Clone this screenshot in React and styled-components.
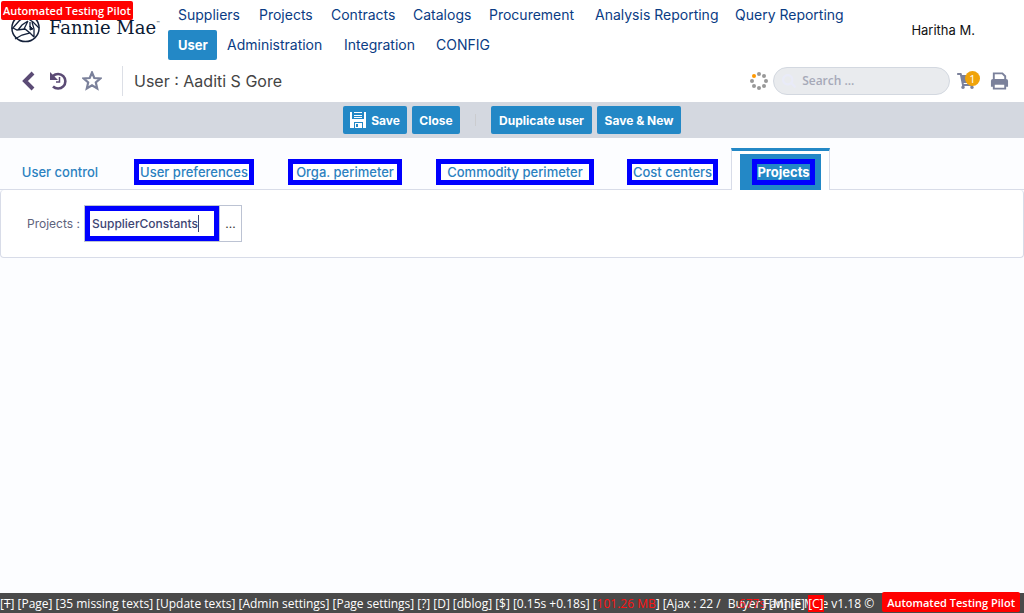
import React from "react";
import styled, { createGlobalStyle, css } from "styled-components";
import { FaShoppingCart, FaSearch } from "react-icons/fa";

const Global = createGlobalStyle`
  * { box-sizing: border-box; }
  body { margin: 0; background: #fcfdff; font-family: Inter, "Open Sans", sans-serif; font-size: 14px; }
  button, input { font: inherit; }
  a { text-decoration: none; color: inherit; }
`;

const Page = styled.div`
  min-height: 100vh;
  display: flex;
  flex-direction: column;
`;

const pilotStyle = css`
  background: #f00;
  color: #fff;
  font: 600 11px/18px "Open Sans", sans-serif;
  border-radius: 2px;
  white-space: nowrap;
`;

const PilotBadge = styled.div`
  ${pilotStyle}
  position: absolute;
  top: 1px;
  left: 1px;
  padding: 1px 2px 0;
`;

const Header = styled.header`
  display: flex;
  height: 60px;
  background: #fff;
`;

const Brand = styled.a`
  display: flex;
  flex: 0 0 168px;
  min-width: 0;
  padding: 11px 0 0 10px;
  gap: 8px;
`;

const BrandName = styled.span`
  color: #0a1a33;
  font: 18px/34px "DejaVu Serif", serif;
  white-space: nowrap;
`;

const Trademark = styled.sup`
  font-size: 4px;
  line-height: 4px;
  vertical-align: 10px;
`;

const Nav = styled.nav`
  flex: 1;
`;

const NavRow = styled.div`
  display: flex;
`;

const NavItem = styled.a`
  width: ${(p) => p.$width}px;
  padding: 0 10px;
  line-height: 30px;
  white-space: nowrap;
  border-radius: 2px;
  color: ${(p) => (p.$active ? "#fff" : "#0a3c84")};
  background: ${(p) => (p.$active ? "#2388c6" : "transparent")};
  font-size: ${(p) => (p.$active ? 13 : 14)}px;
  font-weight: ${(p) => (p.$active ? 700 : 400)};
`;

const Account = styled.div`
  padding: 20px 49px 0 0;
  font-size: 13px;
  line-height: 20px;
  color: #111;
`;

const TitleBar = styled.div`
  display: flex;
  align-items: center;
  height: 42px;
  padding: 0 15px 0 20px;
  background: #fff;
`;

const IconButton = styled.button`
  display: flex;
  border: 0;
  padding: 0;
  background: none;
  margin-right: ${(p) => p.$after || 0}px;
`;

const Title = styled.h1`
  flex: 1;
  margin: 0 0 0 20px;
  padding-left: 11px;
  border-left: 1px solid #dcdfe6;
  font-size: 16px;
  font-weight: 400;
  line-height: 30px;
  color: #444;
`;

const SearchBox = styled.label`
  display: flex;
  align-items: center;
  width: 177px;
  height: 28px;
  margin: 0 7px 0 5px;
  padding: 0 8px;
  gap: 4px;
  border: 1px solid #d3d8e0;
  border-radius: 14px;
  background: #e9ebee;
  color: #e9ebf8;
`;

const SearchInput = styled.input`
  width: 100%;
  border: 0;
  outline: 0;
  background: none;
  font: 600 12px/20px "Open Sans", sans-serif;
  &::placeholder { color: #a6a9b8; opacity: 1; }
`;

const CartButton = styled(IconButton)`
  position: relative;
  width: 23px;
  margin-right: 10px;
  color: #7b819b;
`;

const CartCount = styled.span`
  position: absolute;
  top: -1px;
  right: 0;
  width: 15px;
  border-radius: 8px;
  background: #f0a30a;
  color: #fff;
  font: 11px/15px "Open Sans", sans-serif;
  text-align: center;
`;

const Toolbar = styled.div`
  display: flex;
  justify-content: center;
  align-items: center;
  height: 36px;
  gap: 5px;
  background: #d4d8e0;
`;

const Action = styled.button`
  display: flex;
  align-items: center;
  justify-content: center;
  gap: 5px;
  width: ${(p) => p.$width}px;
  height: 28px;
  padding: 0;
  border: 0;
  border-radius: 2px;
  background: #2388c6;
  color: #fff;
  font-size: 12px;
  font-weight: 700;
  white-space: nowrap;
`;

const Separator = styled.span`
  width: 1px;
  height: 12px;
  margin: 0 10px;
  background: #cbcccf;
`;

const Tabs = styled.nav`
  display: flex;
  align-items: flex-end;
  height: 52px;
  padding: 10px 0 0 20px;
  border-bottom: 1px solid #d8dce8;
`;

const Tab = styled.a`
  width: ${(p) => p.$width}px;
  height: 26px;
  margin: 0 ${(p) => p.$after}px 4px 0;
  line-height: ${(p) => (p.$marked ? 16 : 26)}px;
  border: ${(p) => (p.$marked ? "5px solid #00f" : "0")};
  background: ${(p) => (p.$marked ? "#fff" : "transparent")};
  color: #2b81c0;
  font-size: 13px;
  font-weight: 500;
  text-align: center;
  white-space: nowrap;
`;

const ActiveTab = styled.div`
  height: 42px;
  margin-bottom: -1px;
  padding: 3px 8px 0;
  border: 1px solid #d8dce8;
  border-top: 3px solid #2388c6;
  border-bottom: 0;
  background: #fff;
`;

const ActiveFill = styled.div`
  height: 36px;
  padding: 5px 6px 0 12px;
  background: #2388c6;
`;

const ActiveLink = styled(Tab)`
  display: block;
  background: #2388c6;
  color: #fff;
  font-weight: 700;
`;

const Panel = styled.main`
  display: flex;
  align-items: center;
  height: 68px;
  padding-left: 26px;
  border: 1px solid #d8dce8;
  border-top: 0;
  border-radius: 4px;
  background: #fff;
`;

const FieldLabel = styled.label`
  width: 57px;
  font-size: 12px;
  color: #5e627c;
`;

const FieldBox = styled.div`
  position: relative;
  display: flex;
  border: 1px solid #bcc3d3;
`;

const FieldInput = styled.input`
  width: 134px;
  height: 35px;
  padding: 0 2px;
  border: 5px solid #00f;
  border-radius: 0;
  outline: 0;
  background: #fff;
  color: #3d4573;
  font: 500 12px/20px Inter, sans-serif;
`;

const Caret = styled.span`
  position: absolute;
  left: 113px;
  top: 9px;
  width: 1px;
  height: 17px;
  background: #3d4573;
`;

const MoreButton = styled.button`
  width: 22px;
  height: 35px;
  padding: 0;
  border: 0;
  border-left: 1px solid #bcc3d3;
  background: #fff;
  color: #333;
  font-size: 12px;
`;

const Footer = styled.footer`
  display: flex;
  justify-content: space-between;
  height: 20px;
  margin-top: auto;
  padding-right: 4px;
  background: #4a4a4a;
  color: #fff;
  font: 12px/22px "Open Sans", sans-serif;
  white-space: nowrap;
`;

const DebugInfo = styled.div`
  display: flex;
  gap: 3px;
`;

const Red = styled.span`
  color: #f11;
`;

const Version = styled.div`
  position: relative;
  display: flex;
  gap: 8px;
`;

const Overprint = styled.span`
  position: absolute;
  left: ${(p) => p.$left}px;
  top: 0;
`;

const RedMark = styled.span`
  background: #f00;
`;

const PilotFoot = styled.span`
  ${pilotStyle}
  align-self: flex-start;
  margin-top: -1px;
  padding: 2px 5px 0;
`;

const BrandMark = () => (
  <svg width="31" height="32" viewBox="0 0 31 32" fill="none" stroke="#14213a">
    <circle cx="15.5" cy="17" r="13.6" strokeWidth="1.5" />
    <path d="M2 18 9 10q3-3 8-3l6 4 6 6M3 17l4 2 8-1 5 4-8 2-7 4M8 19l4-5 6-4M18 10l-4 8M22 11l2 7v8M20 11v5M20 22l4 4" strokeWidth="1.3" />
    <path d="m20 15 3 3-3 1z" fill="#14213a" />
  </svg>
);

const dots = [[9, 2], [14, 4], [16, 9], [14, 14], [9, 16], [4, 14], [2, 9], [4, 4]];
const Spinner = () => (
  <svg width="18" height="18" viewBox="0 0 18 18">
    {dots.map(([x, y], i) => <circle key={i} cx={x} cy={y} r="2" fill={i === 7 ? "#f90" : "#999"} />)}
  </svg>
);

const tabs = [
  ["User control", 80, 34, false],
  ["User preferences", 120, 34, true],
  ["Orga. perimeter", 114, 34, true],
  ["Commodity perimeter", 158, 33, true],
  ["Cost centers", 91, 13, true],
];

const menu = [["Suppliers", 81], ["Projects", 72], ["Contracts", 82], ["Catalogs", 76], ["Procurement", 106], ["Analysis Reporting", 140], ["Query Reporting", 128]];
const submenu = [["User", 49], ["Administration", 117], ["Integration", 92], ["CONFIG", 71]];

export default function App() {
  return (
    <Page>
      <Global />
      <Header>
        <Brand href="#"><BrandMark /><BrandName>Fannie Mae<Trademark>™</Trademark></BrandName></Brand>
        <Nav>
          <NavRow>{menu.map(([t, w]) => <NavItem href="#" key={t} $width={w}>{t}</NavItem>)}</NavRow>
          <NavRow>{submenu.map(([t, w]) => <NavItem href="#" key={t} $width={w} $active={t === "User"}>{t}</NavItem>)}</NavRow>
        </Nav>
        <Account>Haritha M.</Account>
      </Header>
      <PilotBadge>Automated Testing Pilot</PilotBadge>
      <TitleBar>
        <IconButton aria-label="Back" $after={13}>
          <svg width="17" height="20" viewBox="0 0 17 20"><path d="M13 2 5 10l8 8" fill="none" stroke="#5b4b75" strokeWidth="4" /></svg>
        </IconButton>
        <IconButton aria-label="History" $after={14}>
          <svg width="18" height="20" viewBox="0 0 18 20" fill="none" stroke="#5b4b75"><path d="M3 5a7.3 7.3 0 1 1 0 10.5" strokeWidth="2.6" /><path d="M0 1v8h8z" fill="#5b4b75" stroke="none" /><path d="M9.5 6v5H6" strokeWidth="1.5" /></svg>
        </IconButton>
        <IconButton aria-label="Favorite">
          <svg width="20" height="20" viewBox="0 0 20 20"><path d="m10 1.5 2.3 5.5 6 .5-4.5 4 1.4 6-5.2-3.2-5.2 3.2 1.4-6-4.5-4 6-.5z" fill="none" stroke="#7b819b" strokeWidth="2.2" /></svg>
        </IconButton>
        <Title>User : Aaditi S Gore</Title>
        <Spinner />
        <SearchBox>
          <FaSearch size={16} />
          <SearchInput aria-label="Search" placeholder="Search ..." />
        </SearchBox>
        <CartButton aria-label="Cart"><FaShoppingCart size={18} /><CartCount>1</CartCount></CartButton>
        <IconButton aria-label="Print">
          <svg width="19" height="20" viewBox="0 0 20 20"><path d="M4 8V2h9l3 3v3" fill="none" stroke="#7b819b" strokeWidth="2" /><path d="M3 8h14q2 0 2 2v6H1v-6q0-2 2-2z" fill="#7b819b" /><path d="M4 13h12v5H4z" fill="#fff" stroke="#7b819b" strokeWidth="2" /></svg>
        </IconButton>
      </TitleBar>
      <Toolbar>
        <Action $width={64}>
          <svg width="16" height="16" viewBox="0 0 16 16"><path d="M0 0h2v7h12V0h2v16h-3v-6H4v6H0zM4 0h8v1H4zM4 3h8v1H4zM4 5h8v1H4zM5 11h7v5H5z" fill="#fff" /><path d="M6 12h2v3H6z" fill="#2388c6" /></svg>
          Save
        </Action>
        <Action $width={48}>Close</Action>
        <Separator />
        <Action $width={101}>Duplicate user</Action>
        <Action $width={84}>Save &amp; New</Action>
      </Toolbar>
      <Tabs>
        {tabs.map(([t, w, after, marked]) => <Tab href="#" key={t} $width={w} $after={after} $marked={marked}>{t}</Tab>)}
        <ActiveTab><ActiveFill><ActiveLink href="#" $width={63} $after={0} $marked>Projects</ActiveLink></ActiveFill></ActiveTab>
      </Tabs>
      <Panel>
        <FieldLabel htmlFor="projects">Projects :</FieldLabel>
        <FieldBox>
          <FieldInput id="projects" defaultValue="SupplierConstants" />
          <Caret />
          <MoreButton aria-label="Choose projects">...</MoreButton>
        </FieldBox>
      </Panel>
      <Footer>
        <DebugInfo>
          <span>[<s>T</s>]</span><span>[Page]</span><span>[35 missing texts]</span><span>[Update texts]</span>
          <span>[Admin settings]</span><span>[Page settings]</span><span>[?]</span><span>[D]</span><span>[dblog]</span>
          <span>[$]</span><span>[0.15s +0.18s]</span><span>[<Red>101.26 MB</Red>]</span><span>[Ajax : 22 /</span>
        </DebugInfo>
        <Version>
          <span>Buyer Fannie Mae v1.18 ©</span>
          <Overprint $left={8}><Red>.677s</Red></Overprint>
          <Overprint $left={34}>] [M] [E] <RedMark>[C]</RedMark></Overprint>
          <PilotFoot>Automated Testing Pilot</PilotFoot>
        </Version>
      </Footer>
    </Page>
  );
}
